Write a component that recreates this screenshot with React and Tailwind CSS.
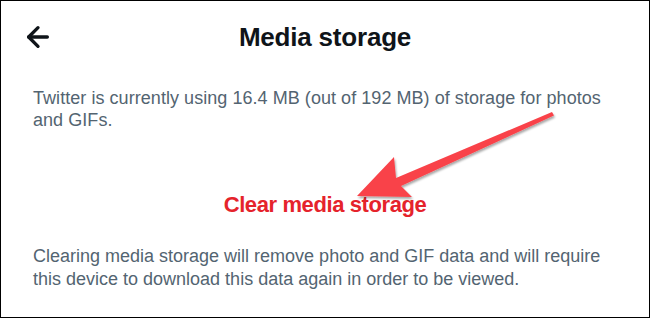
import { FiArrowLeft } from "react-icons/fi";

function CalloutArrow() {
    // red annotation arrow laid over the page
    return (
        <svg
            className="absolute left-0 top-0 pointer-events-none"
            width="650"
            height="318"
            viewBox="0 0 650 318"
        >
            <defs>
                <filter id="arrowShadow" x="-10%" y="-10%" width="130%" height="140%">
                    <feDropShadow dx="1" dy="2" stdDeviation="1.2" floodColor="#000" floodOpacity="0.35" />
                </filter>
            </defs>
            <polygon
                points="356,195 393,156 395,177 551,111 553,114.5 400,185 411,196"
                fill="#f9434a"
                filter="url(#arrowShadow)"
            />
        </svg>
    );
}

export default function App() {
    return (
        <div className="relative w-[650px] h-[318px] bg-white border-[1.5px] border-black overflow-hidden font-['Liberation_Sans',Arial,sans-serif]">
            <div className="relative flex items-center justify-center h-[72px]">
                <FiArrowLeft className="absolute left-[21px] top-[20px] text-[#0f1419]" size={32} strokeWidth={2.5} />
                <h1 className="text-[26px] font-bold text-[#0f1419] tracking-[-0.2px]">Media storage</h1>
            </div>

            <p className="mt-[14px] px-[32px] text-[18px] leading-[22px] text-[#536471] tracking-[0.05px]">
                Twitter is currently using 16.4 MB (out of 192 MB) of storage for photos and GIFs.
            </p>

            <div className="mt-[63px] flex justify-center">
                <span className="text-[22px] leading-[22px] font-bold text-[#e5232b] tracking-[-0.4px]">
                    Clear media storage
                </span>
            </div>

            <p className="mt-[29px] px-[32px] text-[18px] leading-[23px] text-[#536471]">
                Clearing media storage will remove photo and GIF data and will require this device to download this data again in order to be viewed.
            </p>

            <CalloutArrow />
        </div>
    );
}
